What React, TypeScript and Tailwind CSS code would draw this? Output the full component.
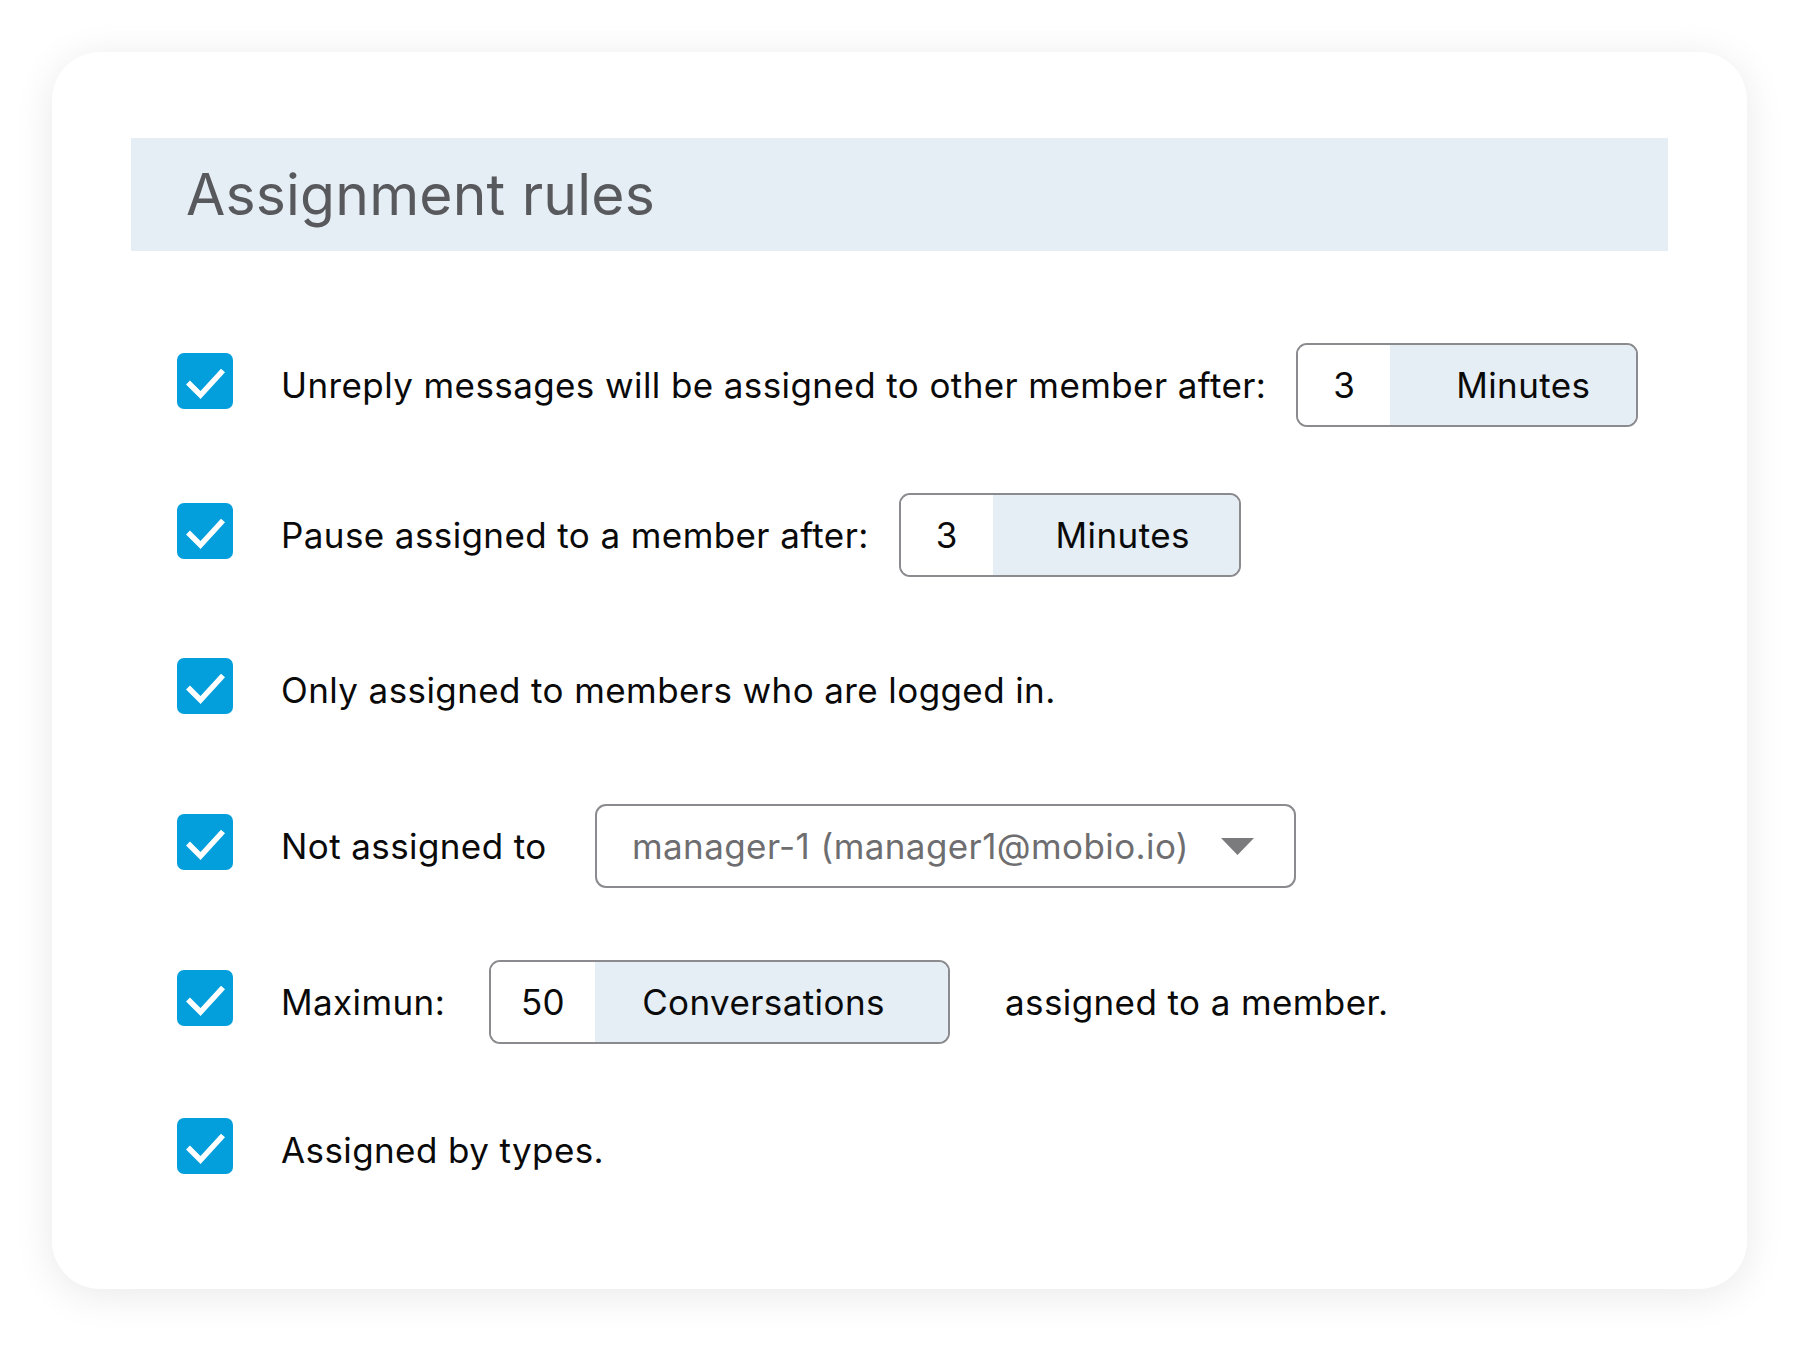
import React from "react";

function Check() {
  return (
    <div className="mb-[9px] flex h-[56px] w-[56px] shrink-0 items-center justify-center rounded-[7px] bg-[#039fdc]">
      <svg width="56" height="56" viewBox="0 0 56 56">
        <path d="M11 29.5 L23.5 42 L46 17.5" fill="none" stroke="#ffffff" strokeWidth="5.5" strokeLinecap="butt" strokeLinejoin="miter" />
      </svg>
    </div>
  );
}

function UnitInput({ value, unit, numW, totalW, unitPad }: { value: string; unit: string; numW: string; totalW: string; unitPad: string }) {
  return (
    <div className={`flex h-[84px] overflow-hidden rounded-[11px] border-2 border-[#8b8b8f] ${totalW}`}>
      <div className={`flex items-center justify-center bg-white ${numW}`}>{value}</div>
      <div className={`flex flex-1 items-center justify-center bg-[#e5edf5] ${unitPad}`}>{unit}</div>
    </div>
  );
}

export default function App() {
  return (
    <div className="min-h-screen bg-white pl-[52px] pt-[52px]" style={{ fontFamily: "Inter, 'Noto Sans', sans-serif" }}>
      <div className="h-[1237px] w-[1695px] rounded-[48px] bg-white px-[79px] pt-[86px] shadow-[0_6px_40px_rgba(0,0,0,0.09)]">
        <div className="flex h-[113px] items-center bg-[#e5edf5] pl-[55px]">
          <h1 className="text-[57px] font-normal tracking-[0.2px] text-[#58595c]">Assignment rules</h1>
        </div>
        <div className="flex flex-col pl-[46px] text-[35px] tracking-[0.4px] text-[#0a0a0a]">
          <div className="mt-[92px] flex h-[84px] items-center">
            <Check />
            <span className="ml-[48px]">Unreply messages will be assigned to other member after:</span>
            <div className="ml-[30px]">
              <UnitInput value="3" unit="Minutes" numW="w-[92px]" totalW="w-[342px]" unitPad="pl-[20px]" />
            </div>
          </div>
          <div className="mt-[66px] flex h-[84px] items-center">
            <Check />
            <span className="ml-[48px]">Pause assigned to a member after:</span>
            <div className="ml-[30px]">
              <UnitInput value="3" unit="Minutes" numW="w-[92px]" totalW="w-[342px]" unitPad="pl-[14px]" />
            </div>
          </div>
          <div className="mt-[71px] flex h-[84px] items-center">
            <Check />
            <span className="ml-[48px]">Only assigned to members who are logged in.</span>
          </div>
          <div className="mt-[72px] flex h-[84px] items-center">
            <Check />
            <span className="ml-[48px] w-[314px]">Not assigned to</span>
            <div className="flex h-[84px] w-[701px] items-center justify-between rounded-[11px] border-2 border-[#8b8b8f] pl-[35px] pr-[40px] text-[#6e6e70]">
              <span>manager-1 (manager1@mobio.io)</span>
              <svg width="33" height="17" viewBox="0 0 33 17">
                <path d="M0 0 L33 0 L16.5 17 Z" fill="#7b7b7d" />
              </svg>
            </div>
          </div>
          <div className="mt-[72px] flex h-[84px] items-center">
            <Check />
            <span className="ml-[48px] w-[208px]">Maximun:</span>
            <UnitInput value="50" unit="Conversations" numW="w-[104px]" totalW="w-[461px]" unitPad="pr-[16px]" />
            <span className="ml-[55px]">assigned to a member.</span>
          </div>
          <div className="mt-[64px] flex h-[84px] items-center">
            <Check />
            <span className="ml-[48px]">Assigned by types.</span>
          </div>
        </div>
      </div>
    </div>
  );
}
